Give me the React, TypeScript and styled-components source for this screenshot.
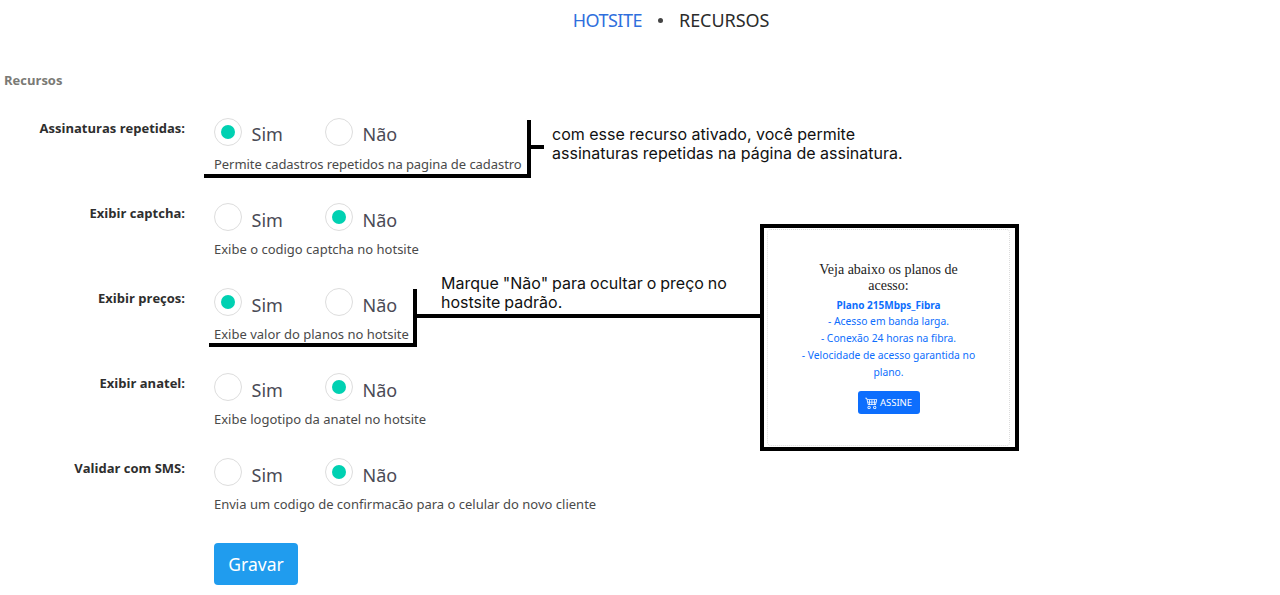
import { BsCart4 } from 'react-icons/bs'
import styled, { createGlobalStyle } from 'styled-components'

const OPTIONS = [
  { label: 'Assinaturas repetidas:', hint: 'Permite cadastros repetidos na pagina de cadastro', value: 'Sim' },
  { label: 'Exibir captcha:', hint: 'Exibe o codigo captcha no hotsite', value: 'Não' },
  { label: 'Exibir preços:', hint: 'Exibe valor do planos no hotsite', value: 'Sim' },
  { label: 'Exibir anatel:', hint: 'Exibe logotipo da anatel no hotsite', value: 'Não' },
  { label: 'Validar com SMS:', hint: 'Envia um codigo de confirmacão para o celular do novo cliente', value: 'Não' },
]

const App = () => {
  return (
    <Page>
      <GlobalStyle />
      <Nav>
        <NavLink $active>HOTSITE</NavLink>
        <NavDot />
        <NavLink>RECURSOS</NavLink>
      </Nav>
      <SectionTitle>Recursos</SectionTitle>
      <Form>
        {OPTIONS.map((option) => (
          <Row key={option.label}>
            <Label>{option.label}</Label>
            <Field>
              <RadioGroup>
                {['Sim', 'Não'].map((choice) => (
                  <Choice key={choice}>
                    <Radio $checked={option.value === choice} />
                    <ChoiceText>{choice}</ChoiceText>
                  </Choice>
                ))}
              </RadioGroup>
              <Hint>{option.hint}</Hint>
            </Field>
          </Row>
        ))}
        <Actions>
          <SaveButton>Gravar</SaveButton>
        </Actions>
      </Form>

      <Note $left={552} $top={125}>
        com esse recurso ativado, você permite
        <br />
        assinaturas repetidas na página de assinatura.
      </Note>
      <Note $left={441} $top={274} $wordGap={-0.5}>
        Marque "Não" para ocultar o preço no
        <br />
        hostsite padrão.
      </Note>

      <Line $left={204} $top={174} $width={326} $height={4} />
      <Line $left={527} $top={120} $width={4} $height={58} />
      <Line $left={531} $top={145} $width={13} $height={4} />
      <Line $left={209} $top={343} $width={208} $height={4} />
      <Line $left={413} $top={289} $width={4} $height={58} />
      <Line $left={417} $top={314} $width={344} $height={4} />

      <Preview>
        <PreviewInner>
          <PreviewTitle>Veja abaixo os planos de acesso:</PreviewTitle>
          <PlanName>Plano 215Mbps_Fibra</PlanName>
          <PlanItem>- Acesso em banda larga.</PlanItem>
          <PlanItem>- Conexão 24 horas na fibra.</PlanItem>
          <PlanItem>- Velocidade de acesso garantida no plano.</PlanItem>
          <SubscribeButton>
            <BsCart4 size={13} />
            ASSINE
          </SubscribeButton>
        </PreviewInner>
      </Preview>
    </Page>
  )
}

const GlobalStyle = createGlobalStyle`
  html, body {
    margin: 0;
    background: #fff;
  }

  body {
    font-family: "Noto Sans", "Open Sans", sans-serif;
  }
`

const Page = styled.div`
  position: relative;
  height: 595px;
  overflow: hidden;
`

const Nav = styled.div`
  display: flex;
  align-items: center;
  justify-content: center;
  gap: 16px;
  padding-top: 8px;
  padding-bottom: 1px;
  padding-left: 62px;
  height: 24px;
`

const NavLink = styled.span<{ $active?: boolean }>`
  font-size: 18px;
  line-height: 24px;
  letter-spacing: ${(props) => (props.$active ? '-0.5px' : '-0.05px')};
  color: ${(props) => (props.$active ? '#2f6fdd' : '#2b2b2b')};
`

const NavDot = styled.span`
  width: 5px;
  height: 5px;
  border-radius: 50%;
  background: #444;
`

const SectionTitle = styled.div`
  margin-top: 38px;
  padding-left: 4px;
  font-family: "Open Sans", sans-serif;
  font-size: 13px;
  line-height: 18px;
  font-weight: 700;
  color: #7a7a75;
`

const Form = styled.div`
  display: flex;
  flex-direction: column;
  margin-top: 29px;
`

const Row = styled.div`
  display: flex;
  gap: 29px;
  height: 85px;
`

const Label = styled.div`
  width: 185px;
  padding-top: 1px;
  text-align: right;
  font-family: "Open Sans", sans-serif;
  font-size: 13px;
  line-height: 18px;
  font-weight: 700;
  color: #2e2e2e;
`

const Field = styled.div`
  display: flex;
  flex-direction: column;
`

const RadioGroup = styled.div`
  display: flex;
  gap: 27px;
  height: 30px;
`

const Choice = styled.div`
  display: flex;
  align-items: center;
  gap: 9.5px;
  width: 84px;
`

const Radio = styled.span<{ $checked?: boolean }>`
  display: flex;
  align-items: center;
  justify-content: center;
  box-sizing: border-box;
  flex: none;
  width: 28px;
  height: 28px;
  margin-top: -2px;
  border: 1px solid #ddd;
  border-radius: 50%;

  &::after {
    content: '';
    display: ${(props) => (props.$checked ? 'block' : 'none')};
    width: 14px;
    height: 14px;
    border-radius: 50%;
    background: #00d1b2;
  }
`

const ChoiceText = styled.span`
  margin-top: 4px;
  font-size: 18px;
  line-height: 24px;
  color: #4a4a55;

  ${Row}:first-child & {
    margin-top: 2px;
  }
`

const Hint = styled.div`
  margin-top: 7px;
  font-size: 13px;
  line-height: 18px;
  color: #4a4a4a;

  ${Row}:first-child & {
    letter-spacing: -0.06px;
  }
`

const Actions = styled.div`
  padding-left: 214px;
`

const SaveButton = styled.button`
  width: 84px;
  height: 42px;
  border: 0;
  border-radius: 4px;
  background: #209cee;
  color: #fff;
  font-family: inherit;
  font-size: 17.5px;
`

const Note = styled.div<{ $left: number; $top: number; $wordGap?: number }>`
  position: absolute;
  left: ${(props) => props.$left}px;
  top: ${(props) => props.$top}px;
  font-family: Inter, sans-serif;
  font-size: 16px;
  line-height: 19px;
  word-spacing: ${(props) => props.$wordGap ?? 0}px;
  color: #111;
`

const Line = styled.div<{ $left: number; $top: number; $width: number; $height: number }>`
  position: absolute;
  left: ${(props) => props.$left}px;
  top: ${(props) => props.$top}px;
  width: ${(props) => props.$width}px;
  height: ${(props) => props.$height}px;
  background: #000;
`

const Preview = styled.div`
  position: absolute;
  left: 760px;
  top: 224px;
  box-sizing: border-box;
  width: 259px;
  height: 227px;
  padding: 1px 5px 1px 3px;
  border: 4px solid #000;
  background: #fff;
`

const PreviewInner = styled.div`
  display: flex;
  flex-direction: column;
  align-items: center;
  box-sizing: border-box;
  height: 100%;
  padding: 32px 24px 0;
  border: 1px dotted #dcdcdc;
  border-radius: 4px;
  text-align: center;
`

const PreviewTitle = styled.div`
  font-family: "Liberation Serif", serif;
  font-size: 14px;
  line-height: 16px;
  font-weight: 500;
  color: #222;
  width: 160px;
`

const PlanName = styled.div`
  margin-top: 3px;
  font-size: 10px;
  line-height: 16px;
  font-weight: 700;
  color: #0d6efd;
`

const PlanItem = styled.div`
  font-size: 10.3px;
  line-height: 17px;
  color: #0d6efd;
`

const SubscribeButton = styled.div`
  display: flex;
  align-items: center;
  justify-content: center;
  gap: 2px;
  margin-top: 10px;
  width: 62px;
  height: 23px;
  border-radius: 3px;
  background: #0d6efd;
  color: #fff;
  font-size: 9.5px;
`

export default App
